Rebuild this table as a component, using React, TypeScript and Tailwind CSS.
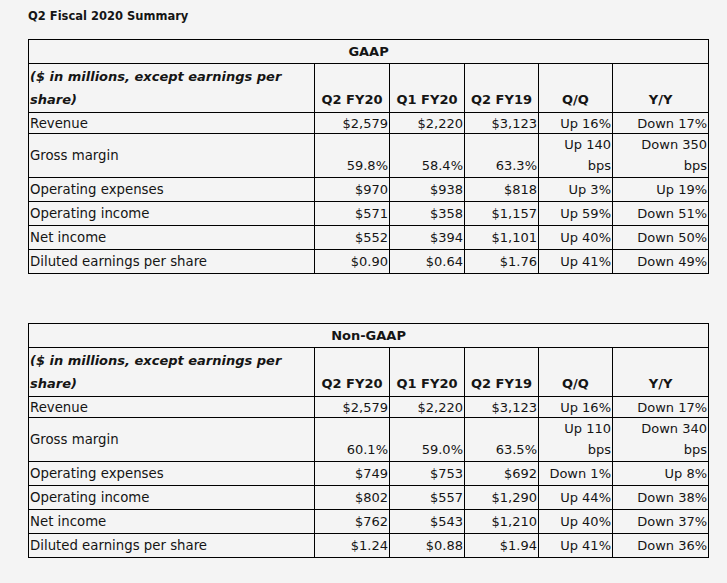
type Row = { label: string; vals: string[]; tall?: boolean; short?: boolean };

const gaap: Row[] = [
  { label: "Revenue", vals: ["$2,579", "$2,220", "$3,123", "Up 16%", "Down 17%"], short: true },
  { label: "Gross margin", vals: ["59.8%", "58.4%", "63.3%", "Up 140 bps", "Down 350 bps"], tall: true },
  { label: "Operating expenses", vals: ["$970", "$938", "$818", "Up 3%", "Up 19%"] },
  { label: "Operating income", vals: ["$571", "$358", "$1,157", "Up 59%", "Down 51%"] },
  { label: "Net income", vals: ["$552", "$394", "$1,101", "Up 40%", "Down 50%"] },
  { label: "Diluted earnings per share", vals: ["$0.90", "$0.64", "$1.76", "Up 41%", "Down 49%"] },
];

const nongaap: Row[] = [
  { label: "Revenue", vals: ["$2,579", "$2,220", "$3,123", "Up 16%", "Down 17%"], short: true },
  { label: "Gross margin", vals: ["60.1%", "59.0%", "63.5%", "Up 110 bps", "Down 340 bps"], tall: true },
  { label: "Operating expenses", vals: ["$749", "$753", "$692", "Down 1%", "Up 8%"] },
  { label: "Operating income", vals: ["$802", "$557", "$1,290", "Up 44%", "Down 38%"] },
  { label: "Net income", vals: ["$762", "$543", "$1,210", "Up 40%", "Down 37%"] },
  { label: "Diluted earnings per share", vals: ["$1.24", "$0.88", "$1.94", "Up 41%", "Down 36%"] },
];

const heads = ["Q2 FY20", "Q1 FY20", "Q2 FY19", "Q/Q", "Y/Y"];

function Table({ title, rows }: { title: string; rows: Row[] }) {
  return (
    <table className="table-fixed border-collapse w-[680px] text-[13.3px] leading-[20px] text-[#151515]">
      <colgroup>
        <col className="w-[286px]" />
        <col className="w-[75px]" />
        <col className="w-[75px]" />
        <col className="w-[74px]" />
        <col className="w-[74px]" />
        <col className="w-[96px]" />
      </colgroup>
      <tbody>
        <tr>
          <td colSpan={6} className="h-[24px] p-0 border border-black text-center font-bold text-[13px] leading-[22px] align-middle">
            {title}
          </td>
        </tr>
        <tr>
          <td className="h-[49px] border border-black px-[1px] align-bottom font-bold italic text-[13px] leading-[23px] pb-[1px]">
            ($ in millions, except earnings per share)
          </td>
          {heads.map((h) => (
            <td key={h} className="border border-black text-center align-bottom font-bold text-[13px] leading-[20px] pb-[2px] whitespace-nowrap">
              {h}
            </td>
          ))}
        </tr>
        {rows.map((r) => {
          const h = r.tall ? "h-[44px]" : r.short ? "h-[21px]" : "h-[24px]";
          const lead = r.tall ? "leading-[21px] pb-[1px]" : r.short ? "leading-[19px] py-0" : "leading-[20px] pb-[1px]";
          return (
            <tr key={r.label}>
              <td className={"border border-black px-[1px] align-middle " + h + " " + (r.short ? "leading-[19px] py-0" : "leading-[20px]")}>
                {r.label}
              </td>
              {r.vals.map((v, i) => (
                <td
                  key={i}
                  className={"border border-black pl-[1px] pr-[1px] text-right align-bottom text-[13px] whitespace-nowrap " + lead}
                >
                  {r.tall && i >= 3 ? (
                    <>
                      {v.replace(" bps", "")}
                      <br />
                      bps
                    </>
                  ) : (
                    v
                  )}
                </td>
              ))}
            </tr>
          );
        })}
      </tbody>
    </table>
  );
}

export default function App() {
  return (
    <div className="bg-[#f4f4f4] min-h-[583px] w-full pl-[28px] pt-[8px] font-['DejaVu_Sans',sans-serif] text-[#151515]">
      <div className="font-bold text-[11.5px] leading-[16px]">Q2 Fiscal 2020 Summary</div>
      <div className="mt-[15px]">
        <Table title="GAAP" rows={gaap} />
      </div>
      <div className="mt-[49px]">
        <Table title="Non-GAAP" rows={nongaap} />
      </div>
    </div>
  );
}
